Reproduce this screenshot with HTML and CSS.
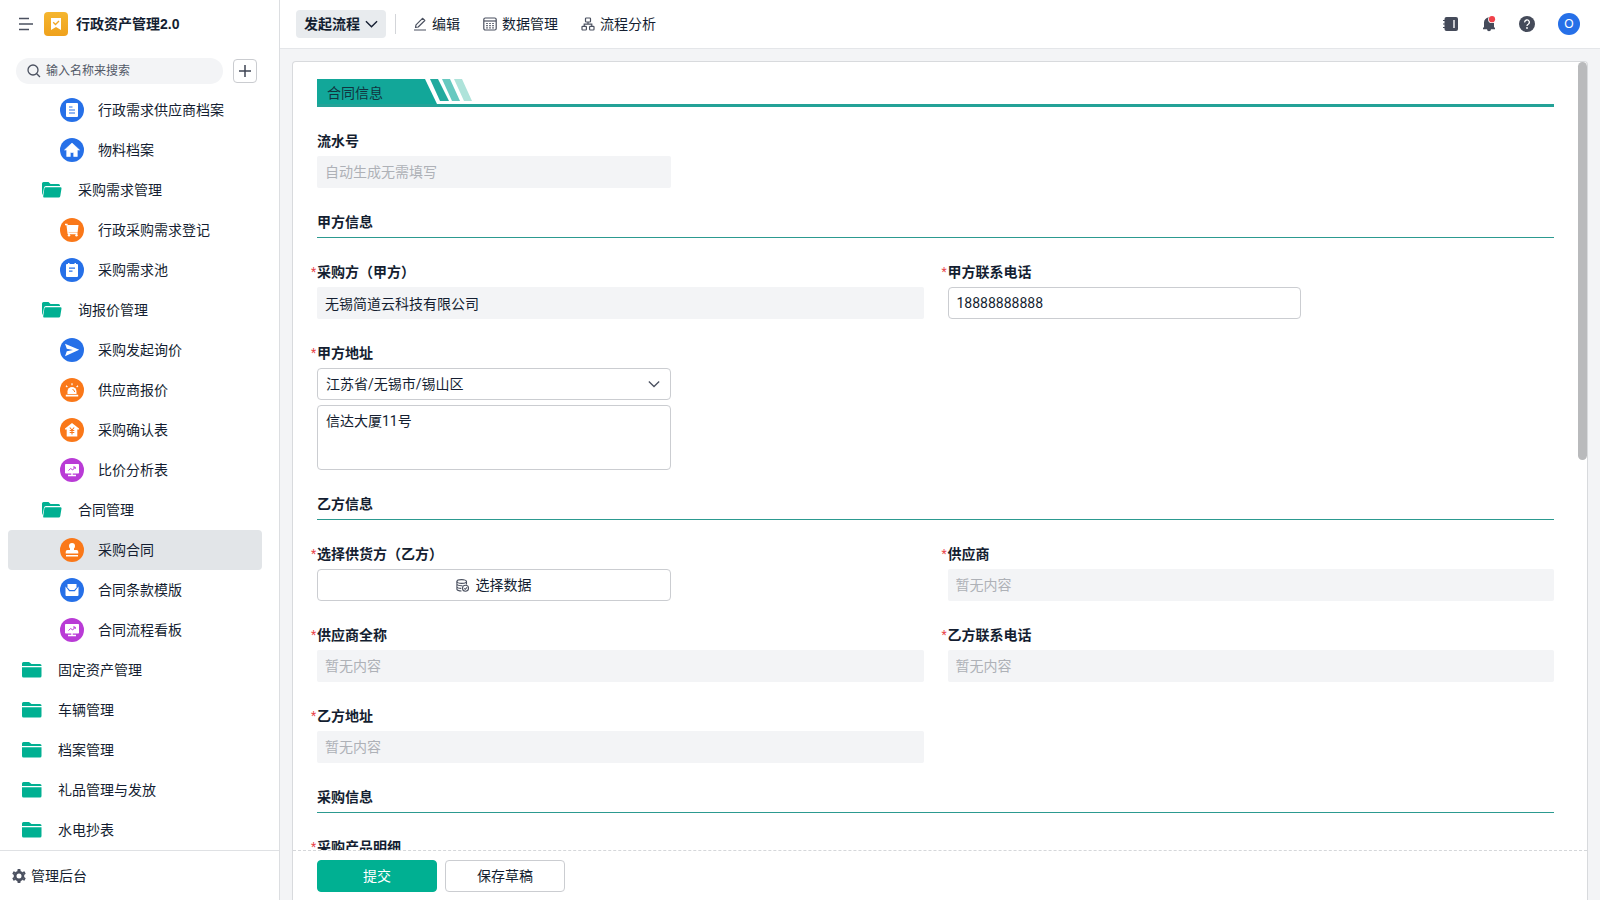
FILE: index.html
```html
<!DOCTYPE html>
<html lang="zh-CN">
<head>
<meta charset="utf-8">
<title>行政资产管理2.0</title>
<link rel="stylesheet" href="styles.css">
</head>
<body>
<svg class="sprite" aria-hidden="true">
  <symbol id="folder" viewBox="0 0 20 16">
    <path d="M0 4V1.500Q0 0 1.500 0H7L9.500 2H18Q19.500 2 19.500 3.500V4Z"/>
    <path d="M0 5.200H19.500V14Q19.500 15.500 18 15.500H1.500Q0 15.500 0 14Z"/>
  </symbol>
  <symbol id="folder-open" viewBox="0 0 20 16">
    <path d="M0 9V1.500Q0 0 1.500 0H6.500L8.500 2H16.500Q18 2 18 3.500V4H4Q2.300 4 2 5.500L.6 13Q0 12 0 9Z"/>
    <path d="M3.500 5.200H18.500Q19.700 5.200 19.500 6.500L18.300 14Q18 15.500 16.700 15.500H2Q1 15.500 1.200 14.300L2.400 6.200Q2.600 5.200 3.500 5.200Z"/>
  </symbol>
  <symbol id="doc" viewBox="0 0 24 24">
    <rect x="6" y="5" width="12" height="14" rx="1" fill="#fff"/>
    <path d="M9 9H12.500M9 12H15M9 15H15" stroke="#2670e8" stroke-width="1.200"/>
  </symbol>
  <symbol id="home" viewBox="0 0 24 24">
    <path d="M12 5L19.500 12H17.300V18.500H13.700V14.500H10.300V18.500H6.700V12H4.500Z" fill="#fff" stroke="#fff" stroke-width=".6" stroke-linejoin="round"/>
  </symbol>
  <symbol id="cart" viewBox="0 0 24 24">
    <path d="M5 6.500H7L8.200 15.500H17.500" fill="none" stroke="#fff" stroke-width="1.300"/>
    <path d="M7.300 7H18.500L17.600 14.500H8.200Z" fill="#fff"/>
    <circle cx="9" cy="17.300" r="1.200" fill="#fff"/><circle cx="16.500" cy="17.300" r="1.200" fill="#fff"/>
  </symbol>
  <symbol id="note" viewBox="0 0 24 24">
    <path d="M7 6H8V5H9.500V6H14.500V5H16V6H17Q18 6 18 7V18Q18 19 17 19H7Q6 19 6 18V7Q6 6 7 6Z" fill="#fff"/>
    <path d="M9 10.200H15M9 13.200H12.500" stroke="#2670e8" stroke-width="1.200"/>
  </symbol>
  <symbol id="plane" viewBox="0 0 24 24">
    <path d="M5 5.700L19.200 11.800 5 18.200 6.800 13.200 13 12 6.800 10.700Z" fill="#fff"/>
  </symbol>
  <symbol id="alarm" viewBox="0 0 24 24">
    <path d="M7.500 16V13.500A4.500 4.500 0 0 1 16.500 13.500V16Z" fill="#fff"/>
    <path d="M5.800 17.600H18.200" stroke="#fff" stroke-width="1.700"/>
    <path d="M12 5.300V7.300M6 7.700L7.400 9M18 7.700L16.600 9" stroke="#fff" stroke-width="1.200"/>
    <path d="M12.500 11.500Q14.500 11.800 14.700 14" fill="none" stroke="#fa7819"/>
  </symbol>
  <symbol id="house-yen" viewBox="0 0 24 24">
    <path d="M12 5L19 10.500V11.500H17.300V18.500H6.700V11.500H5V10.500Z" fill="#fff"/>
    <path d="M9.800 9.500L12 12 14.200 9.500M12 12V16.500M9.700 12.500H14.300M9.700 14.500H14.300" fill="none" stroke="#fa7819" stroke-width="1.100"/>
  </symbol>
  <symbol id="board" viewBox="0 0 24 24">
    <rect x="5" y="6" width="14" height="9.500" rx=".8" fill="#fff"/>
    <path d="M8 17.500H16M12 15V17.500" stroke="#fff" stroke-width="1.400"/>
    <path d="M8.500 12.500L10.700 10.500 12.700 12 15 9.200M13 9H15.200V11" fill="none" stroke="#b93bd6"/>
  </symbol>
  <symbol id="stamp" viewBox="0 0 24 24">
    <path d="M9 8A3 3 0 0 1 15 8Q15 9.500 14 10.500V12H16.500Q18.300 12 18.300 14V15.500H5.700V14Q5.700 12 7.500 12H10V10.500Q9 9.500 9 8Z" fill="#fff"/>
    <path d="M6 17.800H18" stroke="#fff" stroke-width="1.500"/>
  </symbol>
  <symbol id="mail" viewBox="0 0 24 24">
    <path d="M7.500 6H16.500V9.500L14.300 12H9.700L7.500 9.500Z" fill="#fff"/>
    <path d="M5.500 8.500L9.200 13.300H14.800L18.500 8.500V17Q18.500 18 17.500 18H6.500Q5.500 18 5.500 17Z" fill="#fff"/>
  </symbol>
  <symbol id="chevron" viewBox="0 0 14 8">
    <path d="M1 1L7 7 13 1" fill="none" stroke="currentColor" stroke-width="1.500"/>
  </symbol>
</svg>

<div class="app">
  <aside class="sidebar">
    <div class="brand">
      <button class="icon-btn" aria-label="收起菜单">
        <svg width="15" height="14" viewBox="0 0 15 14" fill="none" stroke="#4b5160" stroke-width="1.700"><path d="M0 1.500H10M0 7H14M0 12.500H10"/></svg>
      </button>
      <svg class="logo" width="24" height="24" viewBox="0 0 24 24">
        <defs><linearGradient id="gold" x1="0" y1="0" x2="0" y2="1"><stop offset="0" stop-color="#f5b62f"/><stop offset="1" stop-color="#efa11c"/></linearGradient></defs>
        <rect width="24" height="24" rx="4" fill="url(#gold)"/>
        <path d="M7 6H17V18L12 15 7 18Z" fill="#fff"/>
        <path d="M9.200 10.300L11.500 12.500 15 9" fill="none" stroke="#f1a622" stroke-width="1.300"/>
      </svg>
      <h1 class="brand-name">行政资产管理2.0</h1>
    </div>
    <div class="search-row">
      <label class="search">
        <svg width="14" height="14" viewBox="0 0 14 14" fill="none" stroke="#4b5160" stroke-width="1.300"><circle cx="6" cy="6" r="5"/><path d="M9.700 9.700L13 13"/></svg>
        <input type="text" placeholder="输入名称来搜索" aria-label="输入名称来搜索">
      </label>
      <button class="add-btn" aria-label="新建">
        <svg width="12" height="12" viewBox="0 0 12 12" stroke="#3f4554" stroke-width="1.500"><path d="M0 6H12M6 0V12"/></svg>
      </button>
    </div>
    <nav class="menu">
      <a class="item level-3" href="#"><svg class="badge blue"><use href="#doc"/></svg>行政需求供应商档案</a>
      <a class="item level-3" href="#"><svg class="badge blue"><use href="#home"/></svg>物料档案</a>
      <a class="item level-2" href="#"><svg class="folder"><use href="#folder-open"/></svg>采购需求管理</a>
      <a class="item level-3" href="#"><svg class="badge orange"><use href="#cart"/></svg>行政采购需求登记</a>
      <a class="item level-3" href="#"><svg class="badge blue"><use href="#note"/></svg>采购需求池</a>
      <a class="item level-2" href="#"><svg class="folder"><use href="#folder-open"/></svg>询报价管理</a>
      <a class="item level-3" href="#"><svg class="badge blue"><use href="#plane"/></svg>采购发起询价</a>
      <a class="item level-3" href="#"><svg class="badge orange"><use href="#alarm"/></svg>供应商报价</a>
      <a class="item level-3" href="#"><svg class="badge orange"><use href="#house-yen"/></svg>采购确认表</a>
      <a class="item level-3" href="#"><svg class="badge purple"><use href="#board"/></svg>比价分析表</a>
      <a class="item level-2" href="#"><svg class="folder"><use href="#folder-open"/></svg>合同管理</a>
      <a class="item level-3 active" href="#" aria-current="page"><svg class="badge orange"><use href="#stamp"/></svg>采购合同</a>
      <a class="item level-3" href="#"><svg class="badge blue"><use href="#mail"/></svg>合同条款模版</a>
      <a class="item level-3" href="#"><svg class="badge purple"><use href="#board"/></svg>合同流程看板</a>
      <a class="item" href="#"><svg class="folder"><use href="#folder"/></svg>固定资产管理</a>
      <a class="item" href="#"><svg class="folder"><use href="#folder"/></svg>车辆管理</a>
      <a class="item" href="#"><svg class="folder"><use href="#folder"/></svg>档案管理</a>
      <a class="item" href="#"><svg class="folder"><use href="#folder"/></svg>礼品管理与发放</a>
      <a class="item" href="#"><svg class="folder"><use href="#folder"/></svg>水电抄表</a>
    </nav>
    <a class="admin" href="#">
      <svg width="14" height="14" viewBox="0 0 14 14"><g fill="#4b5160"><path d="M5.700 0H8.300L8.700 2 5.300 2ZM5.700 14H8.300L8.700 12H5.300Z"/><path d="M5.700 0H8.300L8.700 2 5.300 2ZM5.700 14H8.300L8.700 12H5.300Z" transform="rotate(60 7 7)"/><path d="M5.700 0H8.300L8.700 2 5.300 2ZM5.700 14H8.300L8.700 12H5.300Z" transform="rotate(120 7 7)"/></g><circle cx="7" cy="7" r="3.900" fill="none" stroke="#4b5160" stroke-width="2.800"/></svg>
      管理后台
    </a>
  </aside>

  <div class="main">
    <header class="topbar">
      <button class="flow-btn">发起流程<svg width="13" height="8"><use href="#chevron"/></svg></button>
      <span class="divider"></span>
      <nav class="tools">
        <a href="#"><svg width="14" height="14" viewBox="0 0 14 14" fill="none" stroke="#4b5160" stroke-width="1.200"><path d="M1 13H13M2.500 10.500L3 7.800 9.500 1.300 11.800 3.500 5.200 10Z" stroke-linejoin="round"/></svg>编辑</a>
        <a href="#"><svg width="14" height="14" viewBox="0 0 14 14" fill="none" stroke="#4b5160" stroke-width="1.200"><rect x=".8" y="1" width="12.400" height="12" rx="1.500"/><path d="M1 4H13"/><path d="M3.200 6.500H10.800M3.200 8.700H10.800M3.200 10.900H10.800" stroke-dasharray="1.600 1.400"/></svg>数据管理</a>
        <a href="#"><svg width="14" height="14" viewBox="0 0 14 14" fill="none" stroke="#4b5160" stroke-width="1.200"><rect x="4.500" y="1" width="5" height="4" rx=".8"/><rect x="1" y="9.300" width="4.400" height="3.700" rx=".8"/><rect x="8.600" y="9.300" width="4.400" height="3.700" rx=".8"/><path d="M7 5V7.200M3.200 9.300V7.200H10.800V9.300"/></svg>流程分析</a>
      </nav>
      <div class="actions">
        <button class="icon-btn" aria-label="通讯录"><svg width="16" height="16" viewBox="0 0 16 16"><rect x="1.500" y="1" width="13.500" height="14" rx="2" fill="#454b5a"/><path d="M0 4.500H3.500M0 8H3.500M0 11.500H3.500" stroke="#454b5a" stroke-width="1.200"/><path d="M11 4V12" stroke="#fff" stroke-width="1.400"/></svg></button>
        <button class="icon-btn" aria-label="通知"><svg width="16" height="16" viewBox="0 0 16 16"><path d="M2 13.200V12L3 11V6.500A5 5 0 0 1 13 6.500V11L14 12V13.200H10A2 2 0 0 1 6 13.200Z" fill="#454b5a"/><path d="M7.200 1H8.800V3H7.200Z" fill="#454b5a"/><circle cx="11" cy="3.200" r="3.900" fill="#fff"/><circle cx="11" cy="3.200" r="3.100" fill="#f0424a"/></svg></button>
        <button class="icon-btn" aria-label="帮助"><svg width="16" height="16" viewBox="0 0 16 16"><circle cx="8" cy="8" r="8" fill="#454b5a"/><path d="M5.700 6.400A2.300 2.300 0 1 1 9.200 8.200Q8 8.900 8 10" fill="none" stroke="#fff" stroke-width="1.300"/><circle cx="8" cy="12" r=".9" fill="#fff"/></svg></button>
        <button class="avatar" aria-label="账户">O</button>
      </div>
    </header>

    <main class="card">
      <div class="scroll-area">
        <form class="form" id="contract">
          <div class="banner wide">
            <svg width="156" height="25" viewBox="0 0 156 25"><path d="M0 0H108L120 25H0Z" fill="#12a799"/><path d="M113 0H121L132 22H123Z" fill="#22aa9e"/><path d="M125 0H133L143 22H135Z" fill="#67c9c0"/><path d="M137 0H145L155 22H147Z" fill="#aee3da"/></svg>
            <h2 class="banner-title">合同信息</h2>
          </div>
          <div class="field wide half">
            <label for="serial">流水号</label>
            <input class="control short readonly" id="serial" placeholder="自动生成无需填写" readonly>
          </div>
          <h3 class="section wide">甲方信息</h3>
          <div class="field required">
            <label for="buyer">采购方（甲方）</label>
            <input class="control readonly" id="buyer" value="无锡简道云科技有限公司" readonly>
          </div>
          <div class="field required">
            <label for="buyer-tel">甲方联系电话</label>
            <input class="control short" id="buyer-tel" value="18888888888">
          </div>
          <div class="field required">
            <label for="region">甲方地址</label>
            <div class="select short">
              <select class="control" id="region"><option>江苏省/无锡市/锡山区</option></select>
              <svg width="12" height="8"><use href="#chevron"/></svg>
            </div>
            <textarea class="control short address" aria-label="详细地址">信达大厦11号</textarea>
          </div>
          <h3 class="section wide">乙方信息</h3>
          <div class="field required">
            <label for="pick">选择供货方（乙方）</label>
            <button class="control short pick" id="pick" type="button">
              <svg width="13" height="13" viewBox="0 0 13 13" fill="none" stroke="#4b5160" stroke-width="1.100"><ellipse cx="5.700" cy="2.500" rx="4.800" ry="1.900"/><path d="M.9 2.500V10.300Q1.500 12 5.500 12M10.500 2.500V5.500M.9 5.300Q2 7 6.500 6.700M.9 8Q2 9.500 5.300 9.400"/><circle cx="9.500" cy="9.300" r="3"/><path d="M8.200 9.300L9.300 10.300 11 8.400"/></svg>
              选择数据
            </button>
          </div>
          <div class="field required">
            <label for="supplier">供应商</label>
            <input class="control readonly" id="supplier" placeholder="暂无内容" readonly>
          </div>
          <div class="field required">
            <label for="supplier-full">供应商全称</label>
            <input class="control readonly" id="supplier-full" placeholder="暂无内容" readonly>
          </div>
          <div class="field required">
            <label for="supplier-tel">乙方联系电话</label>
            <input class="control readonly" id="supplier-tel" placeholder="暂无内容" readonly>
          </div>
          <div class="field required">
            <label for="supplier-addr">乙方地址</label>
            <input class="control readonly" id="supplier-addr" placeholder="暂无内容" readonly>
          </div>
          <h3 class="section wide">采购信息</h3>
          <div class="field required wide">
            <label>采购产品明细</label>
          </div>
        </form>
        <div class="track"><div class="thumb"></div></div>
      </div>
      <footer class="submit-bar">
        <button class="btn primary" type="submit" form="contract">提交</button>
        <button class="btn" type="button">保存草稿</button>
      </footer>
    </main>
  </div>
</div>
</body>
</html>
```

FILE: styles.css
```css
* {
  box-sizing: border-box;
}

body {
  margin: 0;
  font: 14px/20px Roboto, "Noto Sans CJK SC", sans-serif;
  color: #141e31;
  background: #f3f4f6;
}

button,
input,
select,
textarea {
  font: inherit;
  color: inherit;
}

a {
  color: inherit;
  text-decoration: none;
}

h1,
h2,
h3 {
  margin: 0;
  font-size: 14px;
}

svg {
  flex: none;
  display: block;
}

.sprite {
  position: absolute;
  width: 0;
  height: 0;
}

.app {
  display: flex;
  height: 100vh;
  overflow: hidden;
}

/* Sidebar */

.sidebar {
  flex: none;
  width: 280px;
  display: flex;
  flex-direction: column;
  background: #fff;
  border-right: 1px solid #dcdee1;
}

.brand {
  display: flex;
  align-items: center;
  height: 48px;
  padding: 0 19px;
}

.icon-btn {
  display: flex;
  padding: 0;
  border: 0;
  background: none;
}

.logo {
  margin: 0 8px 0 10px;
}

.brand-name {
  font-family: "Liberation Sans", "Noto Sans CJK SC", sans-serif;
  font-weight: 600;
}

.search-row {
  display: flex;
  align-items: center;
  gap: 10px;
  height: 42px;
  padding: 4px 22px 0 16px;
}

.search {
  flex: 1;
  min-width: 0;
  display: flex;
  align-items: center;
  gap: 5px;
  height: 26px;
  padding: 0 11px;
  border-radius: 13px;
  background: #f3f4f6;
}

.search input {
  flex: 1;
  min-width: 0;
  padding: 0;
  border: 0;
  outline: 0;
  background: none;
  font-size: 12px;
}

.search input::placeholder {
  color: #525967;
}

.add-btn {
  flex: none;
  display: flex;
  align-items: center;
  justify-content: center;
  width: 24px;
  height: 24px;
  padding: 0;
  border: 1px solid #caccd0;
  border-radius: 4px;
  background: #fff;
}

.menu {
  flex: 1;
  min-height: 0;
  overflow: hidden;
  padding: 0 17px 0 8px;
}

.item {
  display: flex;
  align-items: center;
  gap: 16px;
  height: 40px;
  padding-left: 14px;
  border-radius: 4px;
}

.level-2 {
  padding-left: 34px;
}

.level-3 {
  gap: 14px;
  padding-left: 52px;
}

.active {
  background: #e2e5e8;
}

.folder {
  width: 20px;
  height: 16px;
  fill: #00b092;
}

.badge {
  width: 24px;
  height: 24px;
  border-radius: 50%;
}

.blue {
  background: #2670e8;
}

.orange {
  background: #fa7819;
}

.purple {
  background: #b93bd6;
}

.admin {
  flex: none;
  display: flex;
  align-items: center;
  gap: 5px;
  height: 50px;
  padding-left: 12px;
  border-top: 1px solid #dfe1e4;
}

/* Top bar */

.main {
  flex: 1;
  min-width: 0;
  display: flex;
  flex-direction: column;
}

.topbar {
  flex: none;
  display: flex;
  align-items: center;
  height: 49px;
  padding: 0 20px 0 16px;
  background: #fff;
  border-bottom: 1px solid #e4e6e9;
}

.flow-btn {
  display: flex;
  align-items: center;
  gap: 5px;
  height: 28px;
  padding: 0 8px;
  border: 0;
  border-radius: 4px;
  background: #e8ebee;
  font-weight: 600;
}

.divider {
  width: 1px;
  height: 20px;
  margin: 0 17px 0 9px;
  background: #d3d5d9;
}

.tools {
  display: flex;
  gap: 23px;
}

.tools a {
  display: flex;
  align-items: center;
  gap: 5px;
}

.actions {
  display: flex;
  align-items: center;
  gap: 22px;
  margin-left: auto;
}

.avatar {
  width: 22px;
  height: 22px;
  margin-left: 1px;
  padding: 0;
  border: 0;
  border-radius: 50%;
  background: #2670e8;
  color: #fff;
  font-family: "Liberation Sans", sans-serif;
  font-size: 12px;
}

/* Form card */

.card {
  flex: 1;
  min-height: 0;
  display: flex;
  flex-direction: column;
  margin: 12px 12px 0;
  border: 1px solid #d8dadd;
  border-bottom: 0;
  border-radius: 4px 4px 0 0;
  background: #fff;
}

.scroll-area {
  flex: 1;
  min-height: 0;
  display: flex;
  overflow: hidden;
}

.form {
  flex: 1;
  min-width: 0;
  display: grid;
  grid-template-columns: 1fr 1fr;
  align-content: start;
  gap: 24px;
  padding: 17px 24px 0;
}

.wide {
  grid-column: 1 / -1;
}

.half {
  width: calc(50% - 12px);
}

.track {
  flex: none;
  width: 9px;
}

.thumb {
  height: 398px;
  border-radius: 5px;
  background: #b9babc;
}

.banner {
  display: grid;
  border-bottom: 3px solid #23a297;
}

.banner > * {
  grid-area: 1 / 1;
}

.banner-title {
  align-self: center;
  padding: 3px 0 0 10px;
  font-weight: 400;
  color: #11343f;
}

.section {
  padding-bottom: 5px;
  border-bottom: 1px solid #2c9a90;
  font-weight: 600;
}

.field {
  display: flex;
  flex-direction: column;
  align-items: flex-start;
  gap: 5px;
}

.field label {
  position: relative;
  font-weight: 600;
}

.required label::before {
  content: "*";
  position: absolute;
  left: -6px;
  color: #e8444a;
  font-size: 12px;
  font-weight: 400;
}

.control {
  width: 100%;
  height: 32px;
  padding: 0 8px;
  border: 1px solid #cbcdd1;
  border-radius: 4px;
  outline: 0;
  background: #fff;
}

.short {
  width: calc(100% * 7 / 12);
}

.readonly {
  border: 0;
  border-radius: 2px;
  background: #f3f4f6;
}

.readonly::placeholder {
  color: #aeb1b7;
}

.select {
  display: grid;
  align-items: center;
}

.select > * {
  grid-area: 1 / 1;
}

.select select {
  appearance: none;
}

.select svg {
  justify-self: end;
  margin-right: 11px;
  color: #4b5160;
  pointer-events: none;
}

.address {
  height: 65px;
  padding: 5px 8px;
  resize: none;
}

.pick {
  display: flex;
  align-items: center;
  justify-content: center;
  gap: 6px;
}

.submit-bar {
  flex: none;
  display: flex;
  gap: 8px;
  height: 50px;
  padding: 9px 24px 0;
  border-top: 1px dashed #d5d7da;
}

.btn {
  width: 120px;
  height: 32px;
  border: 1px solid #cbcdd1;
  border-radius: 4px;
  background: #fff;
}

.primary {
  border-color: #00b092;
  background: #00b092;
  color: #fff;
}
```
